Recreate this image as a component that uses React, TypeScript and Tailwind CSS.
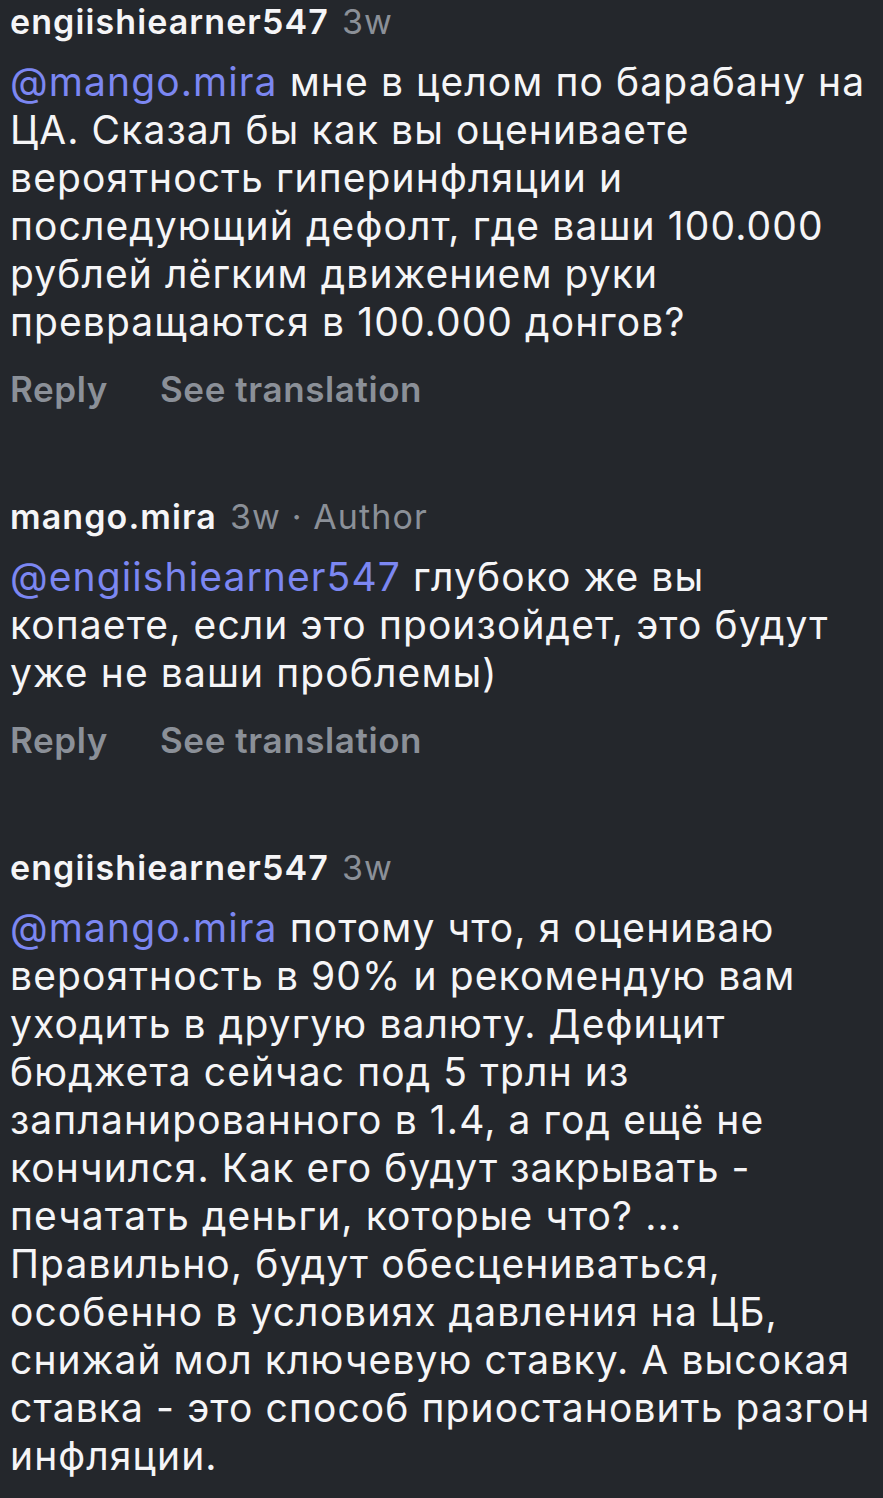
const comments = [
  {
    user: "engiishiearner547",
    meta: "3w",
    mention: "@mango.mira",
    lines: [
      " мне в целом по барабану на",
      "ЦА. Сказал бы как вы оцениваете",
      "вероятность гиперинфляции и",
      "последующий дефолт, где ваши 100.000",
      "рублей лёгким движением руки",
      "превращаются в 100.000 донгов?",
    ],
  },
  {
    user: "mango.mira",
    meta: "3w · Author",
    mention: "@engiishiearner547",
    lines: [
      " глубоко же вы",
      "копаете, если это произойдет, это будут",
      "уже не ваши проблемы)",
    ],
  },
  {
    user: "engiishiearner547",
    meta: "3w",
    mention: "@mango.mira",
    lines: [
      " потому что, я оцениваю",
      "вероятность в 90% и рекомендую вам",
      "уходить в другую валюту. Дефицит",
      "бюджета сейчас под 5 трлн из",
      "запланированного в 1.4, а год ещё не",
      "кончился. Как его будут закрывать -",
      "печатать деньги, которые что? ...",
      "Правильно, будут обесцениваться,",
      "особенно в условиях давления на ЦБ,",
      "снижай мол ключевую ставку. А высокая",
      "ставка - это способ приостановить разгон",
      "инфляции.",
    ],
    last: true,
  },
];

export default function App() {
  return (
    <div
      className="min-h-[1498px] w-full overflow-hidden bg-[#24272c] px-[10px] text-[#f5f5f7]"
      style={{ fontFamily: "Inter, 'Noto Sans', sans-serif" }}
    >
      {comments.map((c, i) => (
        <div key={i} className={c.last ? "" : "pb-[84px]"}>
          <div className="flex items-baseline gap-[13px] text-[34px] leading-[44px] tracking-[1.1px]">
            <span className="font-semibold text-[#f5f5f7]">{c.user}</span>
            <span className="text-[#8b9098]">{c.meta}</span>
          </div>
          <p className="mt-[14px] whitespace-pre text-[39px] leading-[48px] tracking-[1.1px]">
            {c.lines.map((l, j) => (
              <span key={j}>
                {j === 0 && <span className="text-[#7c87f2]">{c.mention}</span>}
                {l}
                {j < c.lines.length - 1 && <br />}
              </span>
            ))}
          </p>
          {!c.last && (
            <div className="mt-[21px] flex gap-[52px] text-[35px] font-semibold leading-[44px] tracking-[0.6px] text-[#8b9098]">
              <span>Reply</span>
              <span>See translation</span>
            </div>
          )}
        </div>
      ))}
    </div>
  );
}
